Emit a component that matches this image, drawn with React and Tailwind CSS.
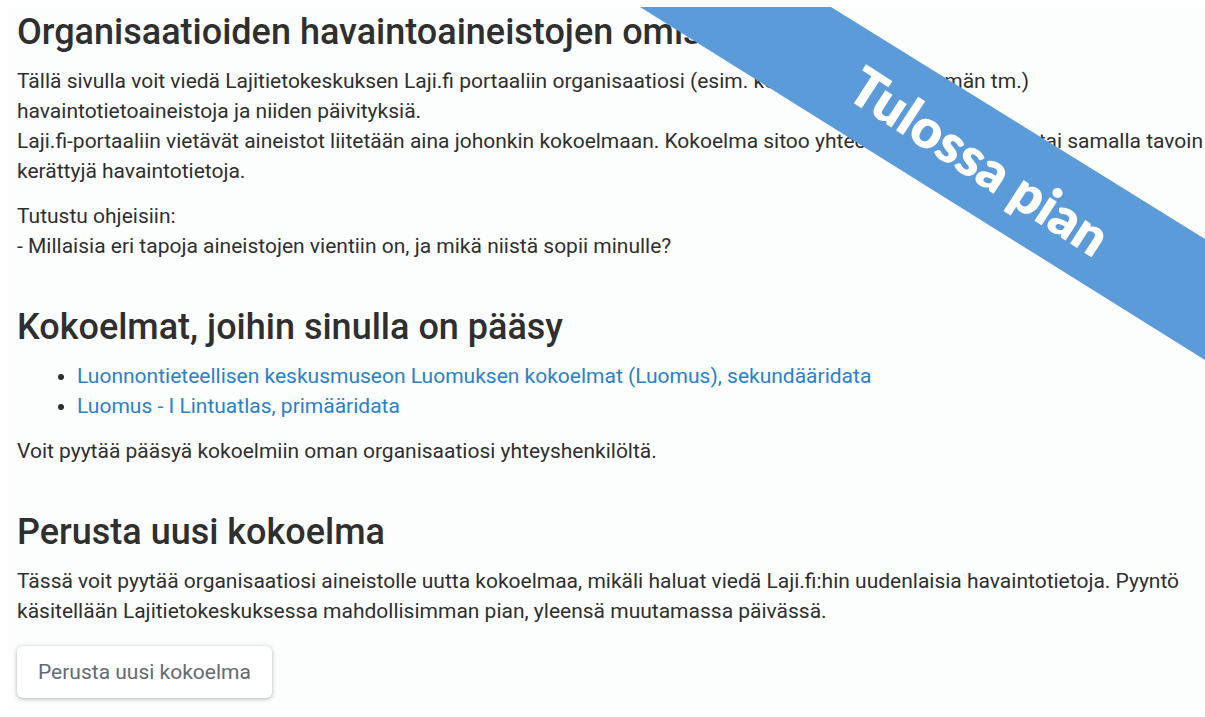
export default function App() {
  return (
    <div className="relative overflow-hidden bg-white pt-[7px] pb-2 pl-2 font-['Roboto','Liberation_Sans',sans-serif] text-[21px] leading-[30px] text-[#2f2f2f]">
      <main className="bg-[#fcfefe] pt-1 pb-3 pl-[9px]">
        <section>
          <h1 className="mb-[13px] text-[36px] leading-[42px] font-medium whitespace-nowrap">Organisaatioiden havaintoaineistojen omistajat</h1>
          <p>
            Tällä sivulla voit viedä Lajitietokeskuksen Laji.fi portaaliin organisaatiosi (esim. koulun, järjestön, ryhmän tm.)<br />
            havaintotietoaineistoja ja niiden päivityksiä.<br />
            Laji.fi-portaaliin vietävät aineistot liitetään aina johonkin kokoelmaan. Kokoelma sitoo yhteen samalla alueella tai samalla tavoin kerättyjä havaintotietoja.
          </p>
          <p className="mt-[15px]">
            Tutustu ohjeisiin:<br />
            - Millaisia eri tapoja aineistojen vientiin on, ja mikä niistä sopii minulle?
          </p>
        </section>
        <section className="mt-[45px]">
          <h2 className="mb-[13px] text-[36px] leading-[42px] font-medium">Kokoelmat, joihin sinulla on pääsy</h2>
          <ul className="list-disc pl-15">
            <li><a href="#luomus" className="text-[#2c80c8]">Luonnontieteellisen keskusmuseon Luomuksen kokoelmat (Luomus), sekundääridata</a></li>
            <li><a href="#lintuatlas" className="text-[#2c80c8]">Luomus - I Lintuatlas, primääridata</a></li>
          </ul>
          <p className="mt-[15px]">Voit pyytää pääsyä kokoelmiin oman organisaatiosi yhteyshenkilöltä.</p>
        </section>
        <section className="mt-[45px]">
          <h2 className="mb-[13px] text-[36px] leading-[42px] font-medium">Perusta uusi kokoelma</h2>
          <p>Tässä voit pyytää organisaatiosi aineistolle uutta kokoelmaa, mikäli haluat viedä Laji.fi:hin uudenlaisia havaintotietoja. Pyyntö käsitellään Lajitietokeskuksessa mahdollisimman pian, yleensä muutamassa päivässä.</p>
          <button type="button" className="mt-5 h-[52px] rounded-md bg-white px-[21px] text-[#636a71] shadow-[0_1px_4px_rgba(0,0,0,0.3)]">Perusta uusi kokoelma</button>
        </section>
      </main>
      <div className="absolute top-[7px] right-0 h-[353px] w-[565px] bg-[#5b9bd9] [clip-path:polygon(0_0,191px_0,100%_232px,100%_100%)]">
        <span className="absolute top-[124px] left-[191px] rotate-[33deg] font-['Lato',sans-serif] text-[54px] leading-[60px] font-extrabold whitespace-nowrap text-white">Tulossa pian</span>
      </div>
    </div>
  )
}
